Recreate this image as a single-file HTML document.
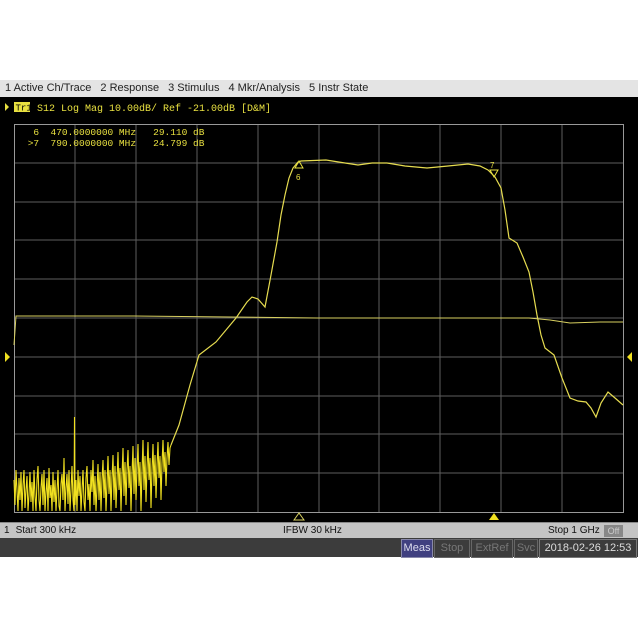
<!DOCTYPE html>
<html><head><meta charset="utf-8"><style>
body{margin:0;width:638px;height:638px;background:#fff;overflow:hidden;position:relative;font-family:"Liberation Sans",sans-serif}
.menu{position:absolute;left:0;top:80px;width:638px;height:17px;background:#e4e4e4;font-size:11px;color:#222;line-height:17px}
.menu span{margin-left:5px;margin-right:4px}
.scr{position:absolute;left:0;top:97px;width:638px;height:425px;background:#000}
.status{position:absolute;left:0;top:522px;width:638px;height:16px;background:#c4c4c4;border-top:1px solid #888;font-size:10px;color:#111;line-height:16px}
.bar{position:absolute;left:0;top:538px;width:638px;height:19px;background:#3c3c3c;font-size:11px;line-height:17px}
.bar div{position:absolute;top:1px;height:17px;border:1px solid #666;color:#777;text-align:center}
</style></head><body>
<div class="menu"><span>1 Active Ch/Trace</span><span>2 Response</span><span>3 Stimulus</span><span>4 Mkr/Analysis</span><span>5 Instr State</span></div>
<div class="scr"></div>
<svg style="position:absolute;left:0;top:0" width="638" height="638">
<g stroke="#5e5e5e" stroke-width="1" fill="none">
<path d="M75 124V512M136 124V512M197 124V512M258 124V512M319 124V512M379 124V512M440 124V512M501 124V512M562 124V512"/>
<path d="M14 163H623M14 202H623M14 240H623M14 279H623M14 318H623M14 357H623M14 396H623M14 434H623M14 473H623"/>
</g>
<rect x="14.5" y="124.5" width="609" height="388" stroke="#999" fill="none"/>
<path d="M5 103 L9 107 L5 111Z" fill="#e8e040"/>
<rect x="14" y="102" width="16" height="10" fill="#e8e040"/>
<text x="15.5" y="110.5" font-family="Liberation Mono" font-size="9" fill="#000">Tr1</text>
<text x="37" y="111" font-family="Liberation Mono" font-size="10" fill="#e8e040">S12 Log Mag 10.00dB/ Ref -21.00dB [D&amp;M]</text>
<text x="22" y="135" font-family="Liberation Mono" font-size="9.5" fill="#e8e040" xml:space="preserve">  6  470.0000000 MHz   29.110 dB</text>
<text x="22" y="146" font-family="Liberation Mono" font-size="9.5" fill="#e8e040" xml:space="preserve"> &gt;7  790.0000000 MHz   24.799 dB</text>
<path stroke="#f0e020" stroke-width="1.1" fill="none" d="M14 480 L15 505 L16 470 L17 490 L18 511 L19 478 L20 500 L21 472 L22 511 L23 485 L24 470 L25 508 L26 490 L27 476 L28 511 L29 495 L30 472 L31 502 L32 482 L33 511 L34 470 L35 496 L36 511 L37 480 L38 466 L39 500 L40 511 L41 488 L42 474 L43 505 L44 470 L45 511 L46 492 L47 478 L48 511 L49 468 L50 498 L51 485 L52 511 L53 472 L54 502 L55 480 L56 511 L57 490 L58 470 L59 506 L60 511 L61 484 L62 474 L63 500 L64 458 L65 511 L66 488 L67 474 L68 504 L69 470 L70 511 L71 490 L72 466 L73 500 L74 511 L74.5 417 L75 505 L76 480 L77 511 L78 470 L79 496 L80 476 L81 511 L82 490 L83 470 L84 502 L85 511 L86 478 L87 466 L88 500 L89 484 L90 511 L91 470 L92 492 L93 460 L94 505 L95 476 L96 511 L97 488 L98 464 L99 500 L100 472 L101 511 L102 480 L103 460 L104 498 L105 470 L106 511 L107 484 L108 456 L109 494 L110 470 L111 511 L112 478 L113 455 L114 500 L115 466 L116 508 L117 480 L118 452 L119 490 L120 468 L121 511 L122 476 L123 448 L124 496 L125 462 L126 505 L127 470 L128 450 L129 488 L130 466 L131 511 L132 474 L133 446 L134 494 L135 458 L136 500 L137 470 L138 444 L139 486 L140 462 L141 511 L142 472 L143 440 L144 490 L145 456 L146 502 L147 468 L148 442 L149 480 L150 458 L151 508 L152 470 L153 444 L154 486 L155 455 L156 498 L157 466 L158 442 L159 478 L160 456 L161 500 L162 464 L163 440 L164 472 L165 452 L166 486 L167 458 L168 442 L169 465 L170 448 L171 445"/>
<path d="M171 445 L179 425 L190 385 L199 355 L216 342 L236 318 L247 302 L252 297 L258 299 L265 307 L271 275 L277 242 L281 215 L285 195 L289 178 L293 168 L298 162 L301 161 L326 160 L345 163 L358 165 L372 163 L387 163 L405 166 L427 168 L448 166 L468 164 L480 166 L488 170 L495 177 L501 188 L505 210 L509 238 L517 243 L523 257 L529 272 L533 292 L537 315 L541 335 L545 348 L554 355 L562 378 L570 398 L578 401 L586 402 L591 408 L596 417 L601 403 L608 392 L615 398 L623 405" stroke="#e6dc50" stroke-width="1.2" fill="none"/>
<path d="M14 345 L16 316 L134 316 L230 317 L317 318 L420 318 L529 318 L550 320 L570 323 L600 322 L623 322" stroke="#d8d060" stroke-width="1" fill="none"/>
<path d="M295 168 L299 161 L303 168Z" fill="none" stroke="#e8e040"/>
<text x="296" y="180" font-family="Liberation Sans" font-size="8" fill="#e8e040">6</text>
<text x="490" y="168" font-family="Liberation Sans" font-size="8" fill="#e8e040">7</text>
<path d="M490 170 L498 170 L494 177Z" fill="none" stroke="#e8e040"/>
<path d="M294 520 L299 513 L304 520Z" fill="none" stroke="#d8d060"/>
<path d="M489 520 L494 513 L499 520Z" fill="#f0e020"/>
<path d="M5 352 L10 357 L5 362Z" fill="#f0e020"/>
<path d="M632 352 L627 357 L632 362Z" fill="#f0e020"/>
</svg>
<div class="status"><span style="margin-left:4px">1</span><span style="margin-left:6px">Start 300 kHz</span><span style="position:absolute;left:283px">IFBW 30 kHz</span><span style="position:absolute;left:548px">Stop 1 GHz</span><span style="position:absolute;left:604px;top:2px;width:19px;height:12px;background:#888;color:#ccc;line-height:12px;font-size:9px;text-align:center">Off</span></div>
<div class="bar">
<div style="left:401px;width:30px;background:#404080;color:#dde;border-color:#88a">Meas</div>
<div style="left:434px;width:34px">Stop</div>
<div style="left:471px;width:40px">ExtRef</div>
<div style="left:514px;width:22px">Svc</div>
<div style="left:539px;width:96px;color:#ddd;border-color:#777">2018-02-26 12:53</div>
</div>
</body></html>
